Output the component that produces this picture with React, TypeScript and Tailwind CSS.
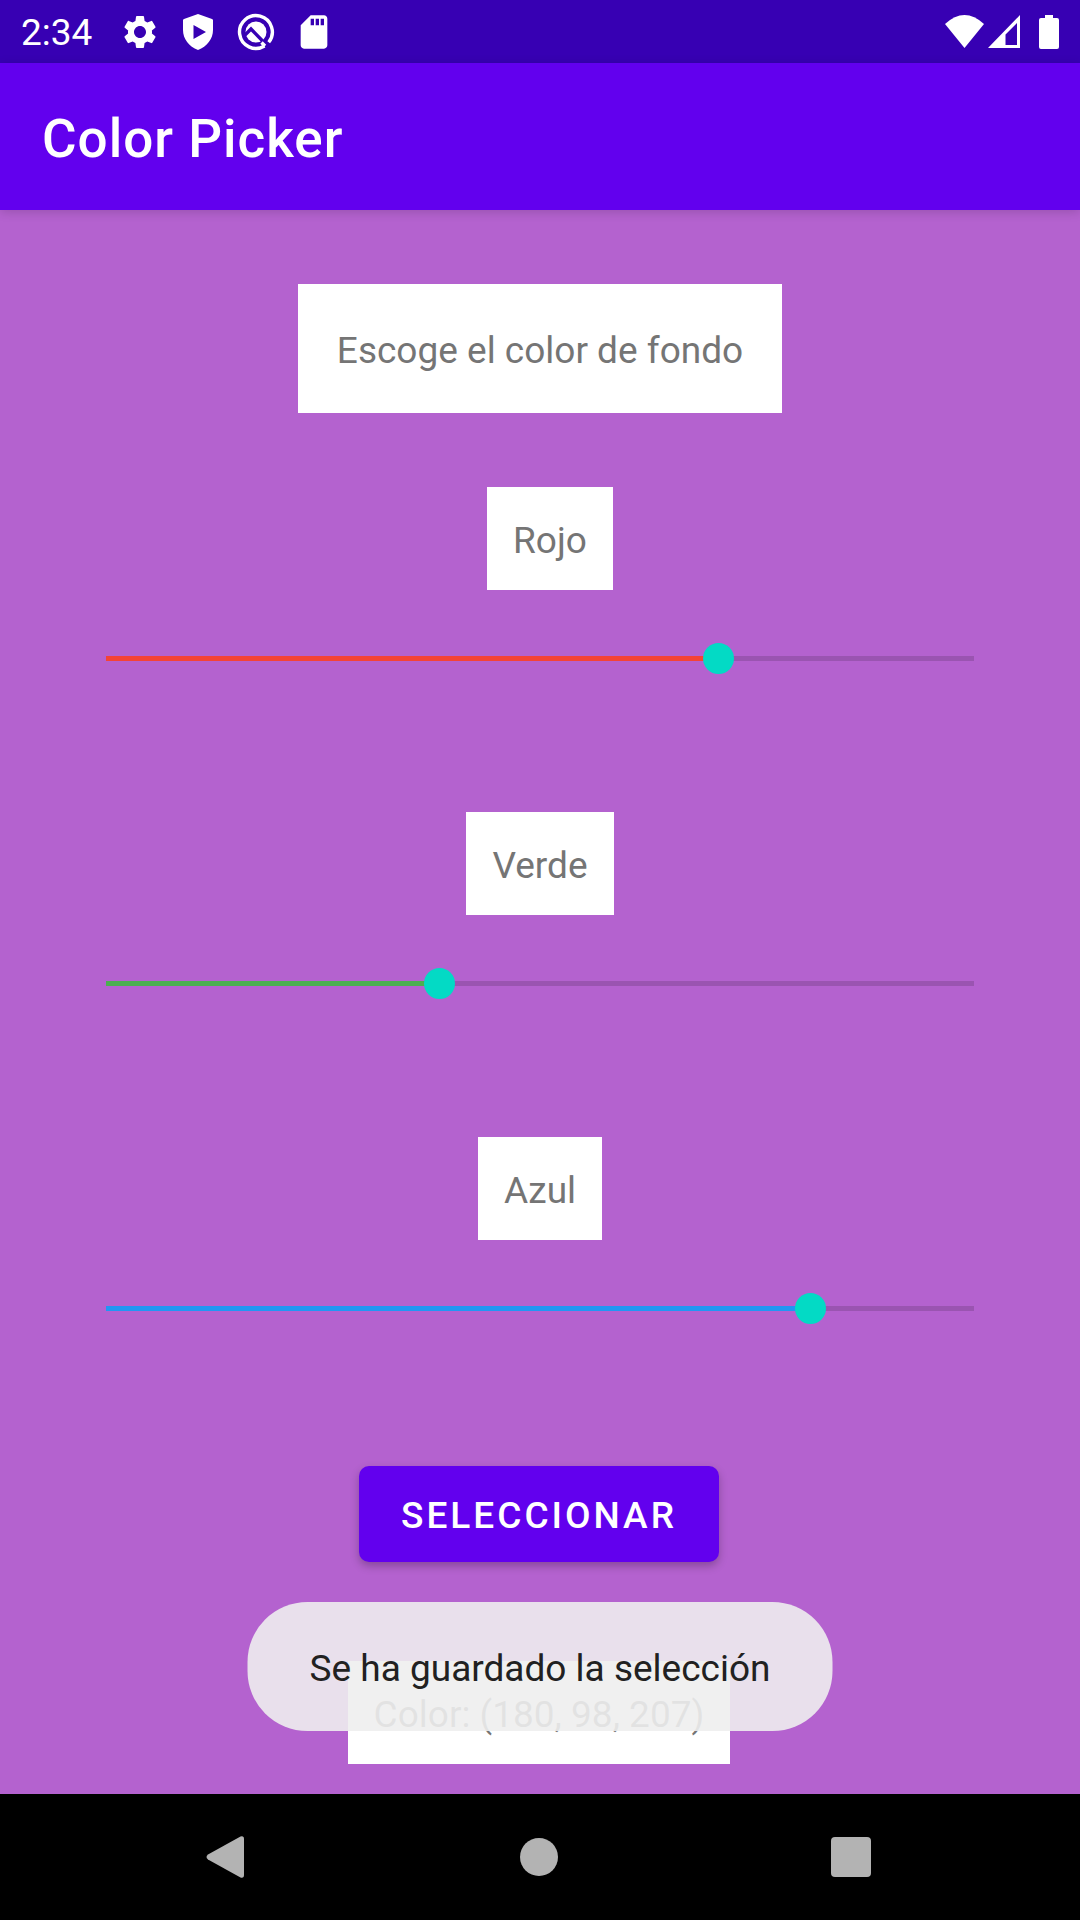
import { useState } from "react";
import { MdSettings, MdSdCard } from "react-icons/md";

type Channel = {
  id: string;
  label: string;
  fill: string;
  labelMargin: string;
};

const channels: Channel[] = [
  { id: "rojo", label: "Rojo", fill: "bg-[#f44336]", labelMargin: "ml-5" },
  { id: "verde", label: "Verde", fill: "bg-[#4caf50]", labelMargin: "" },
  { id: "azul", label: "Azul", fill: "bg-[#2196f3]", labelMargin: "" },
];

function StatusBar() {
  return (
    <div className="flex h-[63px] items-center bg-[#3700b3] px-[21px] text-white">
      <span className="pt-0.5 text-[37px] leading-[44px]">2:34</span>
      <div className="ml-7 flex items-center gap-[18px]">
        <MdSettings className="size-10" />
        <svg className="size-10" viewBox="0 0 40 40" fill="currentColor" aria-hidden="true">
          <path
            fillRule="evenodd"
            d="M20 2 34 7Q35 7.400 35 8.500V18C35 27 29 34.500 20 38C11 34.500 5 27 5 18V8.500Q5 7.400 6 7ZM15.500 13V27L28 20Z"
          />
        </svg>
        <svg className="size-10" viewBox="0 0 40 40" fill="none" stroke="currentColor" aria-hidden="true">
          <path strokeWidth="3.400" d="M28.500 34A16.400 16.400 0 1 1 32.700 30.300" />
          <circle cx="20" cy="20" r="10.500" fill="currentColor" stroke="none" />
          <path stroke="#3700b3" strokeWidth="3.400" d="M8.500 23.500 15 17 31 33.500" />
          <path strokeWidth="3.400" d="M25.500 30.500 29 34" />
        </svg>
        <MdSdCard className="size-10" />
      </div>
      <div className="ml-auto flex items-center">
        <svg className="h-10 w-[39px]" viewBox="0 0 39 40" fill="currentColor" aria-hidden="true">
          <path d="M0 12Q19.500-6 39 12L19.500 36Z" />
        </svg>
        <svg className="ml-1 h-10 w-8" viewBox="0 0 32 40" fill="currentColor" aria-hidden="true">
          <path fillRule="evenodd" d="M32 3V36H0ZM29 11 17.500 22.500V33H29Z" />
        </svg>
        <svg className="ml-[19px] h-10 w-5" viewBox="0 0 20 40" fill="currentColor" aria-hidden="true">
          <path d="M6 3H14V6H18Q20 6 20 8V35Q20 37 18 37H2Q0 37 0 35V8Q0 6 2 6H6Z" />
        </svg>
      </div>
    </div>
  );
}

function ChannelSlider({
  channel,
  value,
  onChange,
}: {
  channel: Channel;
  value: number;
  onChange: (value: number) => void;
}) {
  return (
    <div className="flex w-full flex-col items-center">
      <label
        htmlFor={channel.id}
        className={`bg-white px-[26px] pt-8 pb-7 text-[37px] leading-[43px] text-[#757575] ${channel.labelMargin}`}
      >
        {channel.label}
      </label>
      <div className="relative mt-[53px] flex h-[31px] w-full items-center px-4">
        <div className="h-[5px] w-full bg-black/14">
          <div className={`h-full ${channel.fill}`} style={{ width: `${(value / 255) * 100}%` }} />
        </div>
        <input
          id={channel.id}
          type="range"
          min={0}
          max={255}
          value={value}
          onChange={(e) => onChange(Number(e.target.value))}
          className="absolute inset-0 h-full w-full cursor-pointer appearance-none bg-transparent [&::-webkit-slider-thumb]:size-[31px] [&::-webkit-slider-thumb]:appearance-none [&::-webkit-slider-thumb]:rounded-full [&::-webkit-slider-thumb]:bg-[#03dac5]"
        />
      </div>
    </div>
  );
}

function NavigationBar() {
  return (
    <nav className="flex h-[126px] items-center justify-between bg-black pr-[207px] pl-[205px] text-[#b3b3b3]">
      <button type="button" aria-label="Atrás">
        <svg className="size-[42px]" viewBox="0 0 42 42" fill="currentColor">
          <path d="M3 18.500 35.500 .500Q39 -.500 39 3V39Q39 42.500 35.500 41.500L3 23.500Q0 21 3 18.500Z" />
        </svg>
      </button>
      <button type="button" aria-label="Inicio">
        <svg className="size-[42px]" viewBox="0 0 42 42" fill="currentColor">
          <circle cx="21" cy="21" r="19" />
        </svg>
      </button>
      <button type="button" aria-label="Recientes">
        <svg className="size-[42px]" viewBox="0 0 42 42" fill="currentColor">
          <rect x="0" y="1" width="40" height="40" rx="4" />
        </svg>
      </button>
    </nav>
  );
}

export default function App() {
  const [color, setColor] = useState([180, 98, 207]);
  const [saved, setSaved] = useState([180, 98, 207]);

  return (
    <div
      className="flex min-h-screen flex-col font-[Roboto,sans-serif]"
      style={{ backgroundColor: `rgb(${color.join(", ")})` }}
    >
      <StatusBar />
      <header className="flex h-[147px] items-center bg-[#6200ee] px-[42px] pt-1 shadow-[0_2px_10px_rgba(0,0,0,0.16)]">
        <h1 className="text-[53px] leading-[62px] font-medium tracking-[1px] text-white">Color Picker</h1>
      </header>

      <main className="relative flex flex-1 flex-col items-center px-[90px] pt-[74px] pb-[30px]">
        <p className="bg-white px-[39px] pt-[45px] pb-[41px] text-[37px] leading-[43px] text-[#757575]">
          Escoge el color de fondo
        </p>

        <div className="mt-[74px] flex w-full flex-col gap-[138px]">
          {channels.map((channel, i) => (
            <ChannelSlider
              key={channel.id}
              channel={channel}
              value={color[i]}
              onChange={(value) => setColor(color.map((c, j) => (j === i ? value : c)))}
            />
          ))}
        </div>

        <button
          type="button"
          onClick={() => setSaved(color)}
          className="mt-[142px] mr-0.5 h-24 rounded-[10px] bg-[#6200ee] px-[42px] pt-0.5 text-[37px] leading-[43px] font-medium tracking-[3px] text-white shadow-[0_4px_8px_rgba(0,0,0,0.25)]"
        >
          SELECCIONAR
        </button>

        <output className="mt-[99px] mr-0.5 bg-white px-[26px] pt-8 pb-7 text-[37px] leading-[43px] text-[#757575]">
          Color: ({saved.join(", ")})
        </output>

        <div
          role="status"
          className="absolute bottom-[63px] left-1/2 -translate-x-1/2 rounded-[60px] bg-[#eeeeee]/90 px-[62px] pt-[45px] pb-[41px] text-[37px] leading-[43px] whitespace-nowrap text-[#212121]"
        >
          Se ha guardado la selección
        </div>
      </main>

      <NavigationBar />
    </div>
  );
}
